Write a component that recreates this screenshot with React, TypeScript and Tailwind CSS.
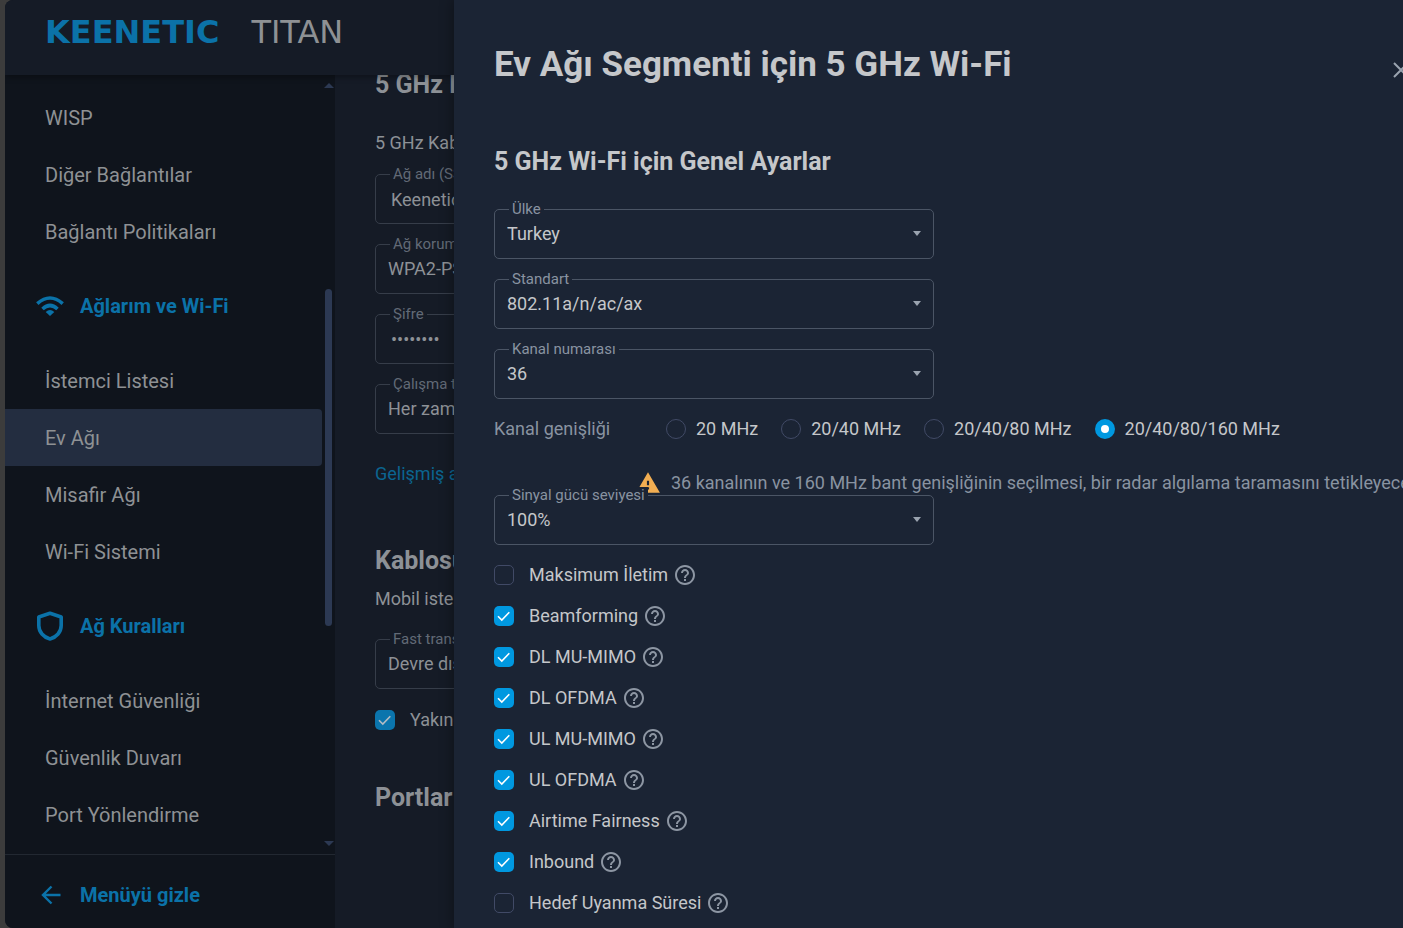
import { useId, useState } from "react";
import clsx from "clsx";
import { MdHelpOutline, MdWarning } from "react-icons/md";

const wifiMenu = ["İstemci Listesi", "Ev Ağı", "Misafir Ağı", "Wi-Fi Sistemi"];
const rulesMenu = ["İnternet Güvenliği", "Güvenlik Duvarı", "Port Yönlendirme"];
const connectionMenu = ["WISP", "Diğer Bağlantılar", "Bağlantı Politikaları"];

const channelWidths = ["20 MHz", "20/40 MHz", "20/40/80 MHz", "20/40/80/160 MHz"];

const options = [
  { label: "Maksimum İletim", checked: false },
  { label: "Beamforming", checked: true },
  { label: "DL MU-MIMO", checked: true },
  { label: "DL OFDMA", checked: true },
  { label: "UL MU-MIMO", checked: true },
  { label: "UL OFDMA", checked: true },
  { label: "Airtime Fairness", checked: true },
  { label: "Inbound", checked: true },
  { label: "Hedef Uyanma Süresi", checked: false },
];

function WifiIcon() {
  return (
    <svg width="28" height="20" viewBox="0 0 28 20" fill="none" stroke="currentColor" strokeWidth="3.6">
      <path d="M1.3 7.6Q14 -3.6 26.7 7.6" />
      <path d="M6.5 13Q14 6 21.5 13" />
      <path d="M9.7 16Q14 12 18.3 16L14 20Z" fill="currentColor" stroke="none" />
    </svg>
  );
}

function ShieldIcon() {
  return (
    <svg width="28" height="30" viewBox="0 0 28 30" fill="none" stroke="currentColor" strokeWidth="3.6" strokeLinejoin="round">
      <path d="M14 2.2L25.2 6V14.5C25.2 21 20.5 26.2 14 28C7.5 26.2 2.8 21 2.8 14.5V6Z" />
    </svg>
  );
}

function ArrowLeftIcon() {
  return (
    <svg width="20" height="20" viewBox="0 0 20 20" fill="none" stroke="currentColor" strokeWidth="2.4">
      <path d="M10.5 1.5L2 10L10.5 18.5M2 10H19.5" />
    </svg>
  );
}

function MenuItem({ label, active }: { label: string; active?: boolean }) {
  return (
    <a
      href="#"
      className={clsx(
        "flex h-[57px] items-center rounded-r-sm pl-10 text-xl text-[#8e9194]",
        active && "bg-[#232d40]"
      )}
    >
      {label}
    </a>
  );
}

function MenuSection({ label, icon }: { label: string; icon: React.ReactNode }) {
  return (
    <div className="flex h-[92px] items-center gap-4 pl-[31px] text-xl font-bold text-[#0b72a8]">
      {icon}
      <span>{label}</span>
    </div>
  );
}

interface FieldProps {
  label: string;
  value: string;
  type?: "select" | "text" | "password";
  dim?: boolean;
}

function Field({ label, value, type = "select", dim }: FieldProps) {
  const id = useId();
  const text = dim ? "text-[#8d9196]" : "text-[#c5c7ca]";

  return (
    <div
      className={clsx(
        "relative h-[50px] w-[440px] rounded-[5px] border",
        dim ? "border-[#363d49]" : "border-[#4b5565]"
      )}
    >
      <label
        htmlFor={id}
        className={clsx(
          "absolute -top-[9px] left-[14px] px-[3px] text-[15px] leading-4 whitespace-nowrap",
          dim ? "bg-[#151b26] text-[#626a76]" : "bg-[#1b2434] text-[#8993a1]"
        )}
      >
        {label}
      </label>
      {type === "select" ? (
        <>
          <select id={id} className={clsx("size-full appearance-none pl-3 text-lg outline-none", text)}>
            <option>{value}</option>
          </select>
          <svg
            className="pointer-events-none absolute top-[21px] right-3 text-[#9aa3af]"
            width="8"
            height="5"
            viewBox="0 0 8 5"
            fill="currentColor"
          >
            <path d="M0 0H8L4 5Z" />
          </svg>
        </>
      ) : (
        <input
          id={id}
          type={type}
          defaultValue={value}
          className={clsx("size-full px-[15px] text-lg outline-none", text)}
        />
      )}
    </div>
  );
}

interface CheckboxProps {
  label: string;
  checked: boolean;
  dim?: boolean;
}

function Checkbox({ label, checked, dim }: CheckboxProps) {
  const [on, setOn] = useState(checked);

  return (
    <label
      className={clsx(
        "flex items-center gap-[15px] text-lg leading-6 whitespace-nowrap",
        dim ? "text-[#8d9196]" : "text-[#c5c7ca]"
      )}
    >
      <span className="relative size-5 shrink-0">
        <input
          type="checkbox"
          checked={on}
          onChange={() => setOn(!on)}
          className={clsx(
            "block size-5 appearance-none rounded-[5px]",
            on ? (dim ? "bg-[#0b75ad]" : "bg-[#0098e0]") : "border border-[#414a66]"
          )}
        />
        {on && (
          <svg
            className={clsx("pointer-events-none absolute inset-0", dim ? "text-[#b5bcc4]" : "text-white")}
            viewBox="0 0 20 20"
            fill="none"
            stroke="currentColor"
            strokeWidth="1.6"
          >
            <path d="M4 10.2L7.8 14L15.3 6.2" />
          </svg>
        )}
      </span>
      {label}
    </label>
  );
}

function Sidebar() {
  return (
    <aside className="flex w-[330px] shrink-0 flex-col bg-[#0f141c]">
      <div className="flex min-h-0 flex-1">
        <nav className="flex-1 overflow-hidden pt-[14px]">
          {connectionMenu.map((item) => (
            <MenuItem key={item} label={item} />
          ))}
          <MenuSection label="Ağlarım ve Wi-Fi" icon={<WifiIcon />} />
          {wifiMenu.map((item) => (
            <MenuItem key={item} label={item} active={item === "Ev Ağı"} />
          ))}
          <MenuSection label="Ağ Kuralları" icon={<ShieldIcon />} />
          {rulesMenu.map((item) => (
            <MenuItem key={item} label={item} />
          ))}
        </nav>
        {/* scrollbar */}
        <div className="flex w-[13px] flex-col items-center py-2 text-[#2c3953]">
          <svg width="10" height="5" viewBox="0 0 10 5" fill="currentColor">
            <path d="M5 0L10 5H0Z" />
          </svg>
          <div className="flex-[201]" />
          <div className="w-[7px] flex-[337] rounded-sm bg-[#2c3953]" />
          <div className="flex-[215]" />
          <svg width="10" height="5" viewBox="0 0 10 5" fill="currentColor">
            <path d="M0 0H10L5 5Z" />
          </svg>
        </div>
      </div>
      <button
        type="button"
        className="flex h-[74px] shrink-0 items-center gap-[19px] border-t border-[#222831] pt-1.5 pl-9 text-xl font-bold text-[#0b72a8]"
      >
        <ArrowLeftIcon />
        Menüyü gizle
      </button>
    </aside>
  );
}

function HomeSegment() {
  return (
    <main className="min-w-0 flex-1 overflow-hidden pl-10 whitespace-nowrap text-[#8d9196]">
      <h2 className="-mt-1 text-[25px] leading-7 font-bold">5 GHz Kablo</h2>
      <p className="mt-8 text-lg leading-6">5 GHz Kablo</p>
      <div className="mt-[19px] flex flex-col gap-5">
        <Field dim type="text" label="Ağ adı (SSID)" value="Keenetic" />
        <Field dim label="Ağ koruması" value="WPA2-PSK" />
        <Field dim type="password" label="Şifre" value="keenetic" />
        <Field dim label="Çalışma takvimi" value="Her zaman" />
      </div>
      <a href="#" className="mt-7 block text-lg leading-6 text-[#0b6590]">
        Gelişmiş ayarlar
      </a>
      <h2 className="mt-[61px] text-[25px] leading-7 font-bold">Kablosuz</h2>
      <p className="mt-3 text-lg leading-6">Mobil istemciler</p>
      <div className="mt-7 mb-[19px]">
        <Field dim label="Fast transition" value="Devre dışı" />
      </div>
      <Checkbox dim label="Yakındaki" checked />
      <h2 className="mt-[52px] text-[25px] leading-7 font-bold">Portlar</h2>
    </main>
  );
}

function WifiDrawer() {
  const [width, setWidth] = useState("20/40/80/160 MHz");

  return (
    <section className="z-10 min-w-0 flex-1 overflow-hidden bg-[#1b2434] pl-10 whitespace-nowrap text-[#c5c7ca] shadow-[-2px_0_12px_rgba(0,0,0,0.3)]">
      <header className="flex items-start justify-between pt-11">
        <h1 className="text-[35px] leading-[42px] font-bold">Ev Ağı Segmenti için 5 GHz Wi-Fi</h1>
        <button type="button" aria-label="Kapat" className="-mr-1.5 mt-[18px] text-[#9aa3af]">
          <svg width="16" height="16" viewBox="0 0 16 16" fill="none" stroke="currentColor" strokeWidth="2">
            <path d="M1 1L15 15M15 1L1 15" />
          </svg>
        </button>
      </header>

      <h2 className="mt-[62px] text-[25px] leading-7 font-bold">5 GHz Wi-Fi için Genel Ayarlar</h2>
      <div className="mt-[33px] flex flex-col gap-5">
        <Field label="Ülke" value="Turkey" />
        <Field label="Standart" value="802.11a/n/ac/ax" />
        <Field label="Kanal numarası" value="36" />
      </div>

      <div className="mt-[18px] flex h-6 items-center text-lg" role="radiogroup" aria-labelledby="channel-width">
        <span id="channel-width" className="w-[172px] shrink-0 text-[#8993a1]">
          Kanal genişliği
        </span>
        <div className="flex gap-[23px]">
          {channelWidths.map((item) => (
            <label key={item} className="flex items-center gap-2.5">
              <input
                type="radio"
                name="channelWidth"
                checked={width === item}
                onChange={() => setWidth(item)}
                className="size-5 appearance-none rounded-full border border-[#414a66] checked:border-[6px] checked:border-[#0098e0] checked:bg-white"
              />
              {item}
            </label>
          ))}
        </div>
      </div>

      <p className="mt-[29px] flex h-[25px] items-center gap-2.5 pl-[141px] text-lg text-[#8993a1]">
        <MdWarning size={26} className="shrink-0 text-[#f2ae52]" />
        36 kanalının ve 160 MHz bant genişliğinin seçilmesi, bir radar algılama taramasını tetikleyecektir.
      </p>
      <Field label="Sinyal gücü seviyesi" value="100%" />

      <ul className="mt-[18px] flex flex-col gap-[17px]">
        {options.map((option) => (
          <li key={option.label} className="flex h-6 items-center gap-[5px]">
            <Checkbox label={option.label} checked={option.checked} />
            <button type="button" aria-label="Yardım" className="text-[#8d96a3]">
              <MdHelpOutline size={24} />
            </button>
          </li>
        ))}
      </ul>
    </section>
  );
}

export default function App() {
  return (
    <div className="h-screen overflow-hidden bg-[#3c3c3c] pl-[5px] font-[Roboto,sans-serif]">
      <div className="flex h-full overflow-hidden rounded-l-lg bg-[#151b26]">
        <div className="flex w-[449px] shrink-0 flex-col">
          <header className="z-10 flex h-[75px] shrink-0 items-start gap-8 bg-[#151b26] pt-3 pl-10 font-['DejaVu_Sans',sans-serif] text-[32px] leading-10 shadow-[0_2px_6px_rgba(0,0,0,0.35)]">
            <span className="font-bold text-[#0b72a8]">KEENETIC</span>
            <span className="text-[#8e9194]">TITAN</span>
          </header>
          <div className="flex min-h-0 flex-1">
            <Sidebar />
            <HomeSegment />
          </div>
        </div>
        <WifiDrawer />
      </div>
    </div>
  );
}
